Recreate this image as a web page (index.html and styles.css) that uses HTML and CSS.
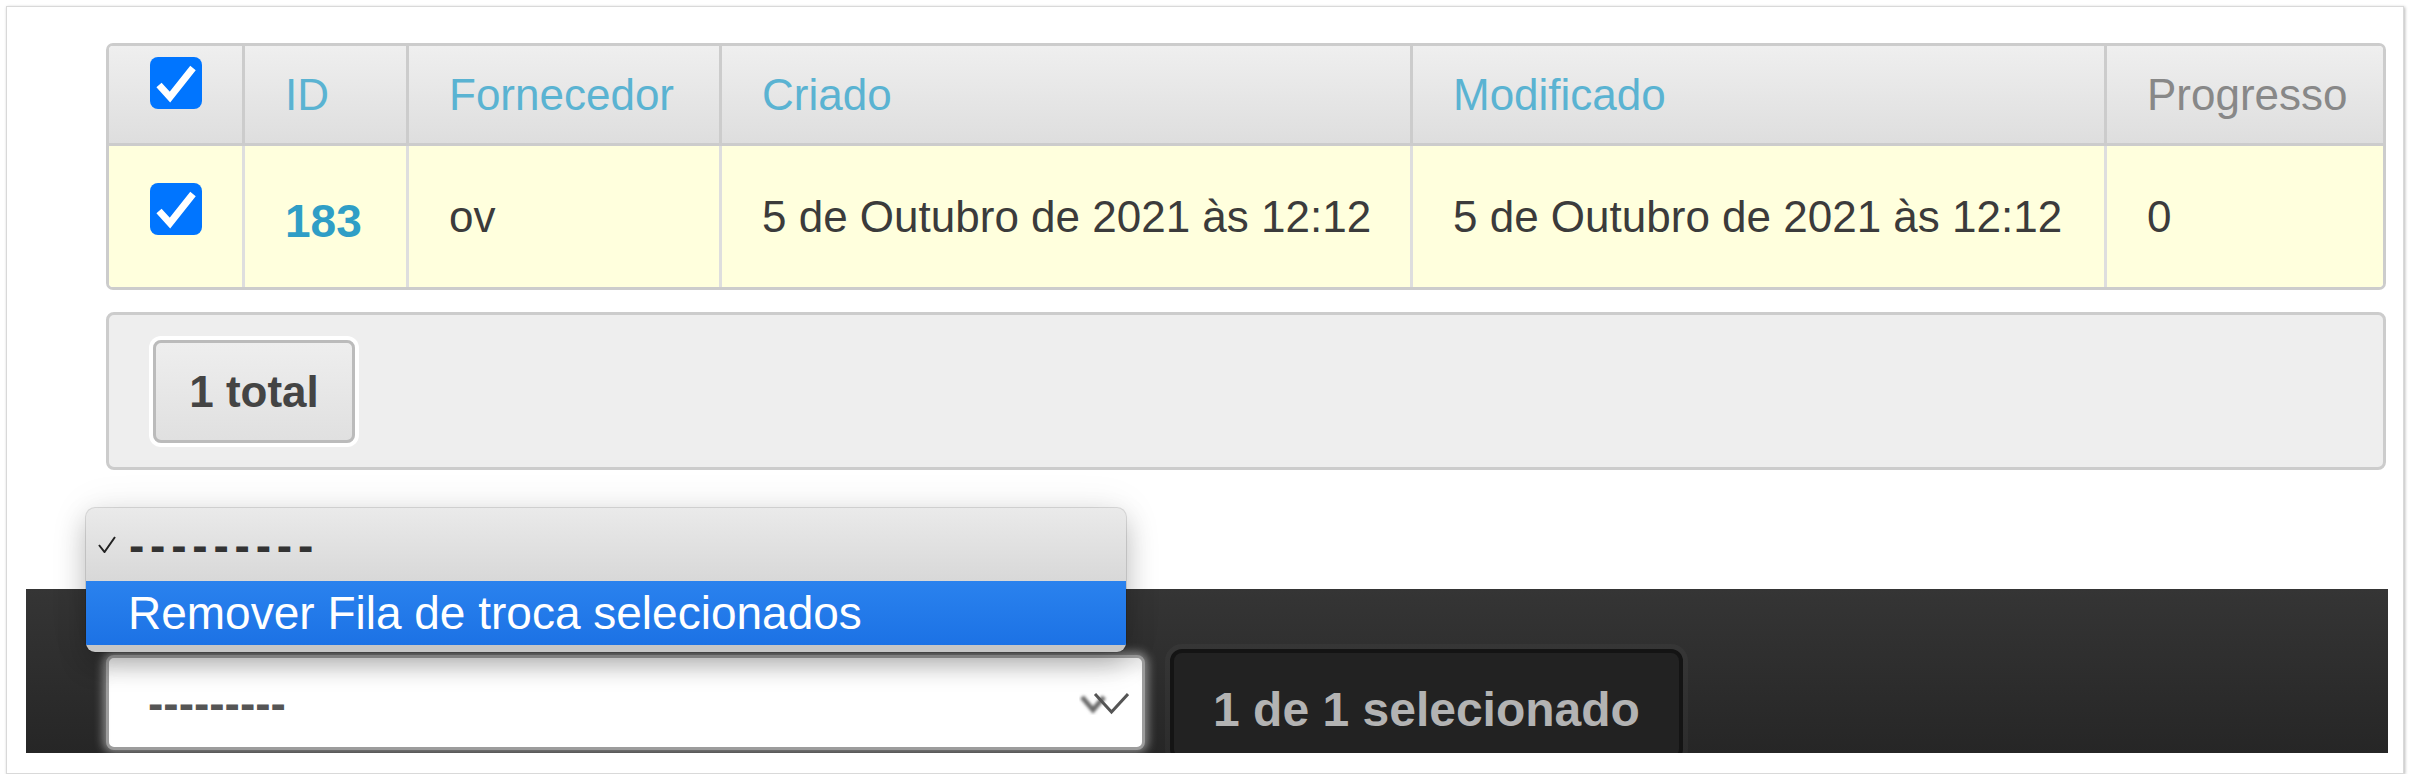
FILE: index.html
```html
<!DOCTYPE html>
<html lang="pt">
<head>
<meta charset="utf-8">
<title>Fila de troca</title>
<link rel="stylesheet" href="styles.css">
</head>
<body>
<div class="frame">
  <div class="results">
    <div class="grid">
      <div class="th th-check"><svg class="cb" viewBox="0 0 52 52" width="52" height="52"><rect width="52" height="52" rx="8" fill="#0075ff"/><polyline points="9,28 20,40 43,11" fill="none" stroke="#fff" stroke-width="7"/></svg></div>
      <div class="th"><a class="sort">ID</a></div>
      <div class="th"><a class="sort">Fornecedor</a></div>
      <div class="th"><a class="sort">Criado</a></div>
      <div class="th"><a class="sort">Modificado</a></div>
      <div class="th"><span class="plain">Progresso</span></div>

      <div class="td td-check"><svg class="cb" viewBox="0 0 52 52" width="52" height="52"><rect width="52" height="52" rx="8" fill="#0075ff"/><polyline points="9,28 20,40 43,11" fill="none" stroke="#fff" stroke-width="7"/></svg></div>
      <div class="td td-id"><a class="idlink">183</a></div>
      <div class="td">ov</div>
      <div class="td">5 de Outubro de 2021 às 12:12</div>
      <div class="td">5 de Outubro de 2021 às 12:12</div>
      <div class="td">0</div>
    </div>
  </div>

  <div class="paginator">
    <span class="total">1 total</span>
  </div>

  <div class="actions">
    <div class="select">
      <span class="select-value">---------</span>
      <svg class="arrow" viewBox="0 0 50 24" width="50" height="24">
        <defs><filter id="blur" x="-50%" y="-50%" width="200%" height="200%"><feGaussianBlur stdDeviation="1.6"/></filter></defs>
        <polyline points="3,6 14,19 25,6" fill="none" stroke="#6a6a6a" stroke-width="5" filter="url(#blur)"/>
        <polyline points="16,3 32.5,21 49,3" fill="none" stroke="#555" stroke-width="3"/>
      </svg>
    </div>
    <button class="counter">1 de 1 selecionado</button>
  </div>

  <div class="menu">
    <div class="opt opt-current">
      <svg class="tick" viewBox="0 0 18 17" width="18" height="17"><polyline points="1,9 6.5,16 17,1" fill="none" stroke="#222" stroke-width="2"/></svg>
      <span class="dashes">---------</span>
    </div>
    <div class="opt opt-active">Remover Fila de troca selecionados</div>
  </div>
</div>
</body>
</html>
```

FILE: styles.css
```css
* { box-sizing: border-box; }

html, body {
  margin: 0;
  padding: 0;
  background: #ffffff;
  font-family: "Liberation Sans", Arial, sans-serif;
}

.frame {
  position: relative;
  margin: 6px 0 0 6px;
  width: 2398px;
  height: 768px;
  border: 1px solid #d9d9d9;
  box-shadow: 1px 1px 3px rgba(0, 0, 0, 0.28);
  background: #fff;
  padding: 36px 15px 0 19px;
}

/* ---------- results table ---------- */
.results {
  margin: 0 2px 0 80px;
  border: 3px solid #cccccc;
  border-radius: 7px;
  overflow: hidden;
}

.grid {
  display: grid;
  grid-template-columns: 133px 164px 313px 691px 694px 1fr;
  grid-template-rows: 100px 141px;
}

.th, .td {
  display: flex;
  align-items: center;
  padding-left: 40px;
  font-size: 44px;
  white-space: nowrap;
}

.th {
  background: linear-gradient(#efefef, #dedede);
  border-bottom: 3px solid #cccccc;
  border-left: 3px solid #cccccc;
}

.td {
  background: #ffffdd;
  border-left: 3px solid #dedede;
  color: #3b3b3b;
}

.th-check, .td-check {
  border-left: none;
  padding-left: 0;
  justify-content: center;
  align-items: flex-start;
}

.th-check { padding-top: 11px; }
.td-check { padding-top: 37px; }

.cb { display: block; }

.sort { color: #5ab3d2; text-decoration: none; }
.plain { color: #888888; }

.td-id { padding-top: 8px; }
.idlink {
  color: #2f9ec6;
  font-weight: bold;
  font-size: 46px;
  text-decoration: none;
}

/* ---------- paginator ---------- */
.paginator {
  margin: 22px 2px 0 80px;
  border: 3px solid #cccccc;
  border-radius: 8px;
  background: #eeeeee;
  padding: 25px 44px 24px;
  display: flex;
}

.total {
  width: 202px;
  height: 103px;
  border: 3px solid #bbbbbb;
  border-radius: 8px;
  box-shadow: 0 0 0 4px #ffffff;
  background: linear-gradient(#eeeeee, #e0e0e0);
  display: flex;
  align-items: center;
  justify-content: center;
  font-weight: bold;
  font-size: 44px;
  color: #444444;
}

/* ---------- action bar ---------- */
.actions {
  margin-top: 119px;
  height: 164px;
  background: linear-gradient(#353535, #262626);
  padding: 60px 0 0 80px;
  display: flex;
  align-items: flex-start;
  gap: 25px;
  overflow: hidden;
}

.select {
  margin-top: 6px;
  width: 1039px;
  height: 95px;
  border: 3px solid #9c9c9c;
  border-radius: 8px;
  background: #ffffff;
  box-shadow: 0 0 10px 3px rgba(255, 255, 255, 0.45), inset 0 22px 18px -14px rgba(0, 0, 0, 0.10);
  padding: 0 13px 0 39px;
  display: flex;
  align-items: center;
  justify-content: space-between;
}

.select-value {
  font-weight: bold;
  font-size: 46px;
  color: #555555;
}

.arrow { display: block; }

.counter {
  width: 513px;
  height: 112px;
  border: 4px solid #141414;
  border-radius: 12px;
  background: #222222;
  box-shadow: 0 0 0 5px rgba(255, 255, 255, 0.03);
  color: #b3b3b3;
  font-family: "Liberation Sans", Arial, sans-serif;
  font-weight: bold;
  font-size: 48px;
  line-height: 48px;
  padding: 9px 0 0;
  text-align: center;
  align-self: flex-start;
}

/* ---------- native select menu overlay ---------- */
.menu {
  position: absolute;
  left: 79px;
  top: 501px;
  width: 1040px;
  height: 144px;
  border-radius: 9px;
  overflow: hidden;
  background: #c6c6c6;
  box-shadow: 0 0 0 1px rgba(0, 0, 0, 0.12), 0 12px 28px rgba(0, 0, 0, 0.22), 0 0 40px rgba(0, 0, 0, 0.08);
}

.opt {
  display: flex;
  align-items: center;
  font-size: 46px;
  white-space: nowrap;
}

.opt-current {
  height: 73px;
  background: linear-gradient(#eaeaea, #d8d8d8);
  padding-left: 12px;
}

.tick { display: block; margin-right: 13px; }

.dashes {
  font-weight: bold;
  font-size: 46px;
  letter-spacing: 5.8px;
  color: #333333;
}

.opt-active {
  height: 64px;
  background: linear-gradient(#2a82ee, #1c72e5);
  color: #ffffff;
  padding-left: 42px;
}
```
